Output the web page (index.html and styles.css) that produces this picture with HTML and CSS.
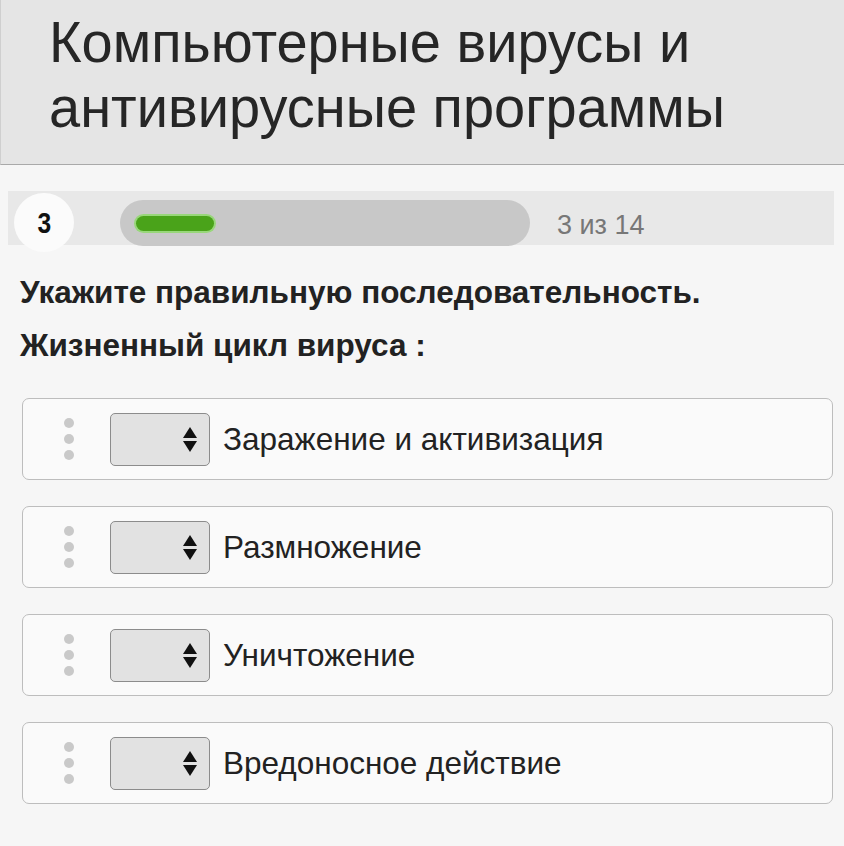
FILE: index.html
```html
<!DOCTYPE html>
<html lang="ru">
<head>
<meta charset="utf-8">
<link rel="stylesheet" href="styles.css">
</head>
<body>
<header class="header">
  <h1 class="title"><span>Компьютерные вирусы и</span><br><span>антивирусные программы</span></h1>
</header>
<div class="progress">
  <div class="num"><span>3</span></div>
  <div class="track"><div class="fill"></div></div>
  <div class="count">3 из 14</div>
</div>
<div class="question">
  <div class="q">Укажите правильную последовательность.</div>
  <div class="q">Жизненный цикл вируса :</div>
</div>
<div class="items">
  <div class="item">
    <div class="dots"><i></i><i></i><i></i></div>
    <div class="sel"><span class="arr"><b class="up"></b><b class="down"></b></span></div>
    <div class="label">Заражение и активизация</div>
  </div>
  <div class="item">
    <div class="dots"><i></i><i></i><i></i></div>
    <div class="sel"><span class="arr"><b class="up"></b><b class="down"></b></span></div>
    <div class="label">Размножение</div>
  </div>
  <div class="item">
    <div class="dots"><i></i><i></i><i></i></div>
    <div class="sel"><span class="arr"><b class="up"></b><b class="down"></b></span></div>
    <div class="label">Уничтожение</div>
  </div>
  <div class="item">
    <div class="dots"><i></i><i></i><i></i></div>
    <div class="sel"><span class="arr"><b class="up"></b><b class="down"></b></span></div>
    <div class="label">Вредоносное действие</div>
  </div>
</div>
</body>
</html>
```
FILE: styles.css
```css
html, body { margin: 0; padding: 0; }
body {
  background: #f6f6f6;
  font-family: "Liberation Sans", Arial, sans-serif;
  color: #222;
  width: 844px;
  height: 846px;
  overflow: hidden;
}
.header {
  background: #e5e5e5;
  border-bottom: 1px solid #a9a9a9;
  border-left: 1px solid #cfcfcf;
  height: 165px;
  box-sizing: border-box;
  padding: 9px 0 0 48px;
}
.title {
  margin: 0;
  font-weight: normal;
  font-size: 58px;
  line-height: 65px;
  color: #262626;
  white-space: nowrap;
}
.title span {
  display: inline-block;
  transform: scaleX(0.965);
  transform-origin: left center;
}
.progress {
  margin: 26px 10px 0 8px;
  height: 54px;
  background: #e8e8e8;
  display: flex;
  align-items: flex-start;
}
.num {
  width: 60px;
  height: 59px;
  border-radius: 50%;
  background: #fbfbfb;
  margin: 2px 0 0 6px;
  display: flex;
  align-items: center;
  justify-content: center;
  font-size: 30px;
  font-weight: bold;
  color: #111;
}
.num span {
  display: inline-block;
  transform: scaleX(0.82);
}
.track {
  margin: 9px 0 0 46px;
  width: 410px;
  height: 46px;
  border-radius: 23px;
  background: #c8c8c8;
  display: flex;
  align-items: center;
}
.fill {
  margin-left: 16px;
  width: 78px;
  height: 15px;
  border-radius: 8px;
  background: #4aa31a;
  box-shadow: 0 0 0 2px #98d77a;
}
.count {
  margin: 19px 0 0 27px;
  font-size: 27px;
  line-height: 30px;
  color: #777;
}
.question {
  margin: 21px 0 0 20px;
}
.q {
  font-weight: bold;
  font-size: 31.5px;
  line-height: 53px;
  color: #222;
}
.items {
  margin: 26px 11px 0 22px;
  display: flex;
  flex-direction: column;
  gap: 26px;
}
.item {
  height: 82px;
  box-sizing: border-box;
  border: 1px solid #bdbdbd;
  border-radius: 7px;
  background: #fafafa;
  display: flex;
  align-items: center;
}
.dots {
  width: 10px;
  margin-left: 41px;
  display: flex;
  flex-direction: column;
  gap: 6px;
}
.dots i {
  width: 10px;
  height: 10px;
  border-radius: 50%;
  background: #c9c9c9;
}
.sel {
  margin-left: 36px;
  width: 100px;
  height: 53px;
  box-sizing: border-box;
  border: 1px solid #8c8c8c;
  border-radius: 5px;
  background: #e2e2e2;
  display: flex;
  align-items: center;
  justify-content: flex-end;
}
.arr {
  display: flex;
  flex-direction: column;
  gap: 3px;
  margin-right: 12px;
}
.arr b {
  width: 0;
  height: 0;
  border-left: 7px solid transparent;
  border-right: 7px solid transparent;
}
.arr .up { border-bottom: 11px solid #111; }
.arr .down { border-top: 11px solid #111; }
.label {
  margin-left: 13px;
  font-size: 31.5px;
  color: #222;
}
```
